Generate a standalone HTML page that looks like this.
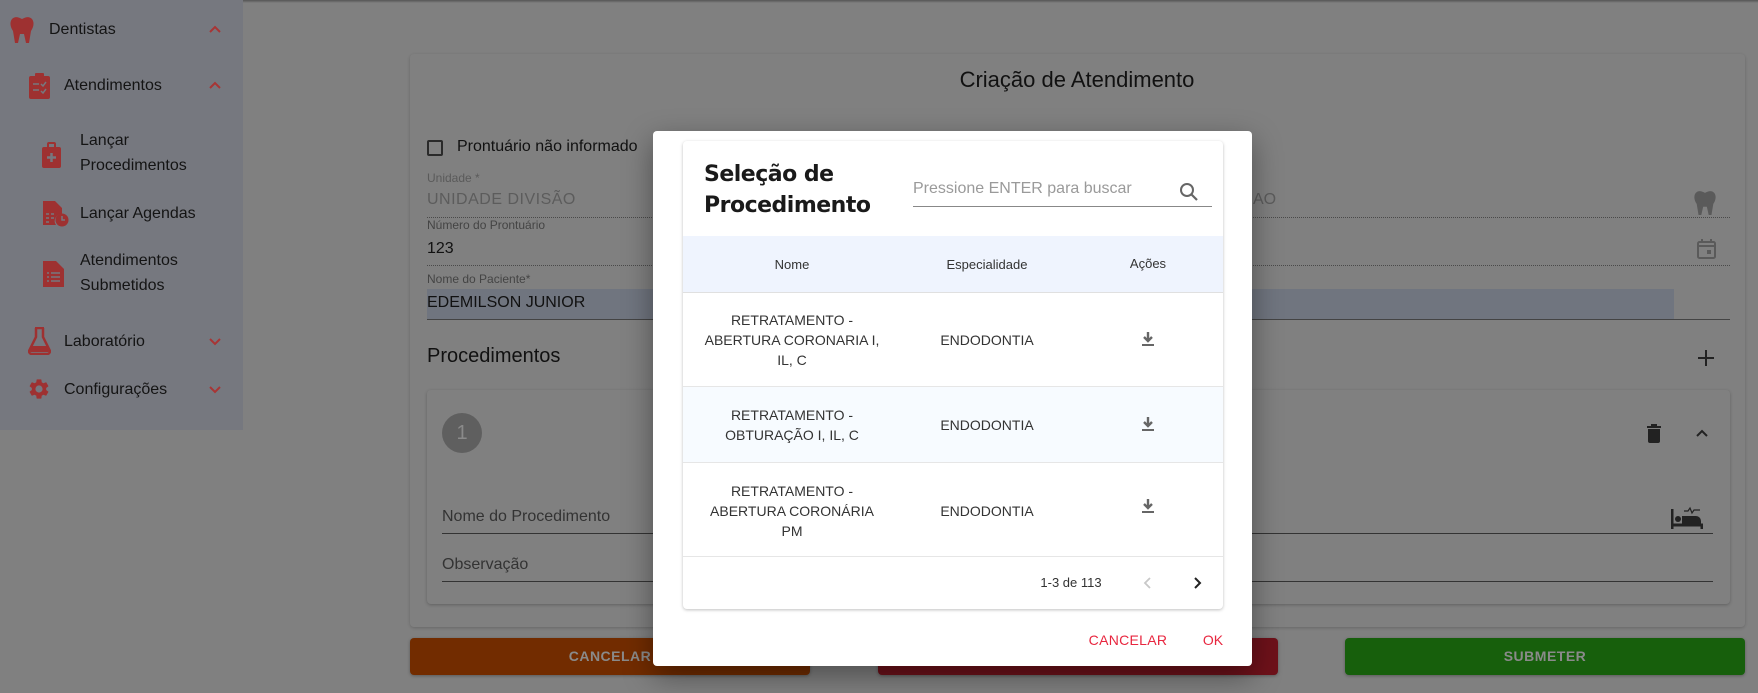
<!DOCTYPE html>
<html><head><meta charset="utf-8"><style>
*{box-sizing:border-box;margin:0;padding:0}
body{width:1758px;height:693px;overflow:hidden;background:#808080;font-family:"Liberation Sans",sans-serif;position:relative}
.a{position:absolute}
.sb{left:0;top:0;width:243px;height:430px;background:#76787f}
.st{font-size:16px;color:#141414;line-height:25px}
.lbl{font-size:12px;color:#444}
.line{height:0;border-top:1px dotted #4a4a4a}
.btn{height:37px;border-radius:4px;color:#8a8a8a;font-weight:bold;font-size:14px;text-align:center;line-height:37px;letter-spacing:.5px;box-shadow:0 1px 3px rgba(0,0,0,.3)}
.dlg{left:653px;top:131px;width:599px;height:535px;background:#fff;border-radius:4px}
.card{left:30px;top:10px;width:540px;height:468px;background:#fff;border-radius:4px;box-shadow:0 1px 3px rgba(0,0,0,.25);overflow:hidden}
.cell{font-size:14px;color:#333;text-align:center;line-height:20px}
</style></head><body>
<div class="a" style="left:0;top:0;width:1758px;height:3px;background:linear-gradient(#555,#808080)"></div>
<div class="a sb"></div>
<svg class="a" style="left:9px;top:16px" width="26" height="28" viewBox="0 0 26 28"><path d="M3 3C6 0 9 1 13 3C17 1 20 0 23 3C26 7 24 12 22 15L20 27H17L15 18H11L9 27H6L4 15C2 12 0 7 3 3Z" fill="#9e3131"/></svg>
<div class="a st" style="left:49px;top:17px">Dentistas</div>
<svg class="a" style="left:208px;top:24px" width="14" height="10" viewBox="0 0 14 10"><path d="M2 8L7 3L12 8" stroke="#a83535" stroke-width="2" fill="none"/></svg>
<svg class="a" style="left:29px;top:73px" width="21" height="26" viewBox="0 0 21 26"><rect x="0" y="3" width="21" height="23" rx="2" fill="#9e3131"/><rect x="6" y="0" width="9" height="6" rx="1" fill="#9e3131"/><path d="M4 11h6M4 17h6M12 11l2 2 3-4M12 18l2 2 3-4" stroke="#76787f" stroke-width="1.5" fill="none"/></svg>
<div class="a st" style="left:64px;top:73px">Atendimentos</div>
<svg class="a" style="left:208px;top:80px" width="14" height="10" viewBox="0 0 14 10"><path d="M2 8L7 3L12 8" stroke="#a83535" stroke-width="2" fill="none"/></svg>
<svg class="a" style="left:42px;top:142px" width="20" height="26" viewBox="0 0 20 26"><rect x="0" y="5" width="19" height="21" rx="2" fill="#9e3131"/><rect x="6" y="1" width="7" height="6" rx="1" fill="none" stroke="#9e3131" stroke-width="2"/><path d="M9.5 11v9M5 15.5h9" stroke="#76787f" stroke-width="2.5"/></svg>
<div class="a st" style="left:80px;top:128px">Lançar<br>Procedimentos</div>
<svg class="a" style="left:43px;top:201px" width="26" height="26" viewBox="0 0 26 26"><path d="M0 0H12L19 7V13A7 7 0 0 0 13 24H0Z" fill="#9e3131"/><circle cx="19" cy="19" r="6.5" fill="#9e3131"/><path d="M19 15v4h3" stroke="#76787f" stroke-width="1.5" fill="none"/><path d="M3 13h3M3 17h3M3 21h3M8 13h3M8 17h3" stroke="#76787f" stroke-width="1.5"/></svg>
<div class="a st" style="left:80px;top:201px">Lançar Agendas</div>
<svg class="a" style="left:43px;top:261px" width="21" height="26" viewBox="0 0 21 26"><path d="M0 0H13L21 8V26H0Z" fill="#9e3131"/><path d="M4 12h2M8 12h9M4 16h2M8 16h9M4 20h2M8 20h9" stroke="#76787f" stroke-width="1.5"/></svg>
<div class="a st" style="left:80px;top:248px">Atendimentos<br>Submetidos</div>
<svg class="a" style="left:28px;top:327px" width="23" height="28" viewBox="0 0 23 28"><path d="M7 1h9M8 1v9L1 24a3 3 0 0 0 3 3H19a3 3 0 0 0 3-3L15 10V1" stroke="#9e3131" stroke-width="2.5" fill="none"/><path d="M4 19H19L21 25H2Z" fill="#9e3131"/></svg>
<div class="a st" style="left:64px;top:329px">Laboratório</div>
<svg class="a" style="left:208px;top:337px" width="14" height="10" viewBox="0 0 14 10"><path d="M2 2L7 7L12 2" stroke="#a83535" stroke-width="2" fill="none"/></svg>
<svg class="a" style="left:27px;top:377px" width="24" height="24" viewBox="0 0 24 24"><path d="M19.14 12.94c.04-.3.06-.61.06-.94s-.02-.64-.07-.94l2.03-1.58a.49.49 0 0 0 .12-.61l-1.92-3.32a.49.49 0 0 0-.59-.22l-2.39.96c-.5-.38-1.03-.7-1.620-.94l-.36-2.54a.48.48 0 0 0-.48-.41h-3.84a.48.48 0 0 0-.47.41l-.36 2.54c-.59.24-1.13.57-1.62.94l-2.390-.96a.48.48 0 0 0-.59.22L2.74 8.87a.47.47 0 0 0 .12.61l2.03 1.58c-.05.3-.09.63-.09.94s.02.64.07.94l-2.03 1.58a.49.49 0 0 0-.12.61l1.92 3.32c.12.22.37.29.59.22l2.39-.96c.5.38 1.03.7 1.62.94l.36 2.54c.05.24.24.41.48.41h3.84c.24 0 .44-.17.47-.41l.36-2.54c.59-.24 1.13-.56 1.62-.94l2.39.96c.22.08.47 0 .59-.22l1.92-3.32a.47.47 0 0 0-.12-.61zM12 15.6a3.6 3.6 0 1 1 0-7.2 3.6 3.6 0 0 1 0 7.2z" fill="#9e3131"/></svg>
<div class="a st" style="left:64px;top:377px">Configurações</div>
<svg class="a" style="left:208px;top:385px" width="14" height="10" viewBox="0 0 14 10"><path d="M2 2L7 7L12 2" stroke="#a83535" stroke-width="2" fill="none"/></svg>

<div class="a" style="left:410px;top:54px;width:1335px;height:573px;border-radius:4px;box-shadow:0 1px 3px rgba(0,0,0,.2)"></div>
<div class="a" style="left:0;width:2154px;top:67px;text-align:center;font-size:22px;color:#111">Criação de Atendimento</div>
<div class="a" style="left:427px;top:140px;width:16px;height:16px;border:2px solid #2a2a2a;border-radius:2px"></div>
<div class="a" style="left:457px;top:138px;font-size:16px;color:#111">Prontuário não informado</div>
<div class="a lbl" style="left:427px;top:171px;color:#5a5a5a">Unidade *</div>
<div class="a" style="left:427px;top:191px;font-size:16px;color:#5c5c5c;letter-spacing:.5px">UNIDADE DIVISÃO</div>
<div class="a" style="left:1253px;top:191px;font-size:16px;color:#5c5c5c">AO</div>
<div class="a line" style="left:427px;top:217px;width:1303px"></div>
<div class="a lbl" style="left:427px;top:218px">Número do Prontuário</div>
<div class="a" style="left:427px;top:240px;font-size:16px;color:#111">123</div>
<div class="a line" style="left:427px;top:265px;width:1303px"></div>
<div class="a lbl" style="left:427px;top:272px">Nome do Paciente*</div>
<div class="a" style="left:427px;top:289px;width:1247px;height:30px;background:#70757f"></div>
<div class="a" style="left:427px;top:294px;font-size:16px;color:#111">EDEMILSON JUNIOR</div>
<div class="a" style="left:427px;top:319px;width:1303px;border-top:1px solid #444"></div>
<svg class="a" style="left:1693px;top:190px" width="24" height="26" viewBox="0 0 26 28"><path d="M3 3C6 0 9 1 13 3C17 1 20 0 23 3C26 7 24 12 22 15L20 27H17L15 18H11L9 27H6L4 15C2 12 0 7 3 3Z" fill="#5a5a5a"/></svg>
<svg class="a" style="left:1697px;top:239px" width="19" height="20" viewBox="0 0 19 20"><rect x="1" y="3" width="17" height="16" rx="1.5" stroke="#5a5a5a" stroke-width="2" fill="none"/><path d="M1 7h17M5 0v4M14 0v4" stroke="#5a5a5a" stroke-width="2"/><rect x="10" y="11" width="4" height="4" fill="#5a5a5a"/></svg>
<div class="a" style="left:427px;top:345px;font-size:20px;color:#111">Procedimentos</div>
<svg class="a" style="left:1697px;top:349px" width="18" height="18"><path d="M9 1v16M1 9h16" stroke="#222" stroke-width="2"/></svg>
<div class="a" style="left:427px;top:390px;width:1303px;height:214px;border-radius:4px;box-shadow:0 1px 3px rgba(0,0,0,.25)"></div>
<div class="a" style="left:442px;top:413px;width:40px;height:40px;border-radius:50%;background:#5f5f5f;color:#8a8a8a;font-size:20px;text-align:center;line-height:40px">1</div>
<svg class="a" style="left:1646px;top:424px" width="16" height="19" viewBox="0 0 16 19"><path d="M1 3h14M5 1h6" stroke="#222" stroke-width="2"/><path d="M2 5h12v12a2 2 0 0 1-2 2H4a2 2 0 0 1-2-2Z" fill="#222"/></svg>
<svg class="a" style="left:1695px;top:428px" width="14" height="10"><path d="M2 8L7 3L12 8" stroke="#222" stroke-width="2" fill="none"/></svg>
<div class="a" style="left:442px;top:508px;font-size:16px;color:#333">Nome do Procedimento</div>
<svg class="a" style="left:1671px;top:505px" width="32" height="25" viewBox="0 0 32 25"><path d="M1 4v20M1 20h30v4" stroke="#222" stroke-width="3" fill="none"/><circle cx="7" cy="14" r="3" fill="#222"/><path d="M11 11h14a5 5 0 0 1 5 5v4H11Z" fill="#222"/><path d="M13 6h4l2-3 2 5 2-3h6" stroke="#222" stroke-width="1.2" fill="none"/></svg>
<div class="a" style="left:442px;top:533px;width:1271px;border-top:1px solid #333"></div>
<div class="a" style="left:442px;top:556px;font-size:16px;color:#333">Observação</div>
<div class="a" style="left:442px;top:581px;width:1271px;border-top:1px solid #333"></div>
<div class="a btn" style="left:410px;top:638px;width:400px;background:#722c00">CANCELAR</div>
<div class="a btn" style="left:878px;top:638px;width:400px;background:#6e111a"></div>
<div class="a btn" style="left:1345px;top:638px;width:400px;background:#175f0c">SUBMETER</div>

<div class="a dlg" style="box-shadow:0 10px 30px rgba(0,0,0,.4)">
 <div class="a card">
  <div class="a" style="left:21px;top:18px;font-size:22px;font-weight:bold;color:#1a1a1a;line-height:31px;font-family:'DejaVu Sans','Liberation Sans',sans-serif;letter-spacing:-0.5px">Seleção de<br>Procedimento</div>
  <div class="a" style="left:230px;top:39px;font-size:16px;color:#9a9a9a">Pressione ENTER para buscar</div>
  <svg class="a" style="left:496px;top:41px" width="20" height="20" viewBox="0 0 20 20"><circle cx="8" cy="8" r="6" stroke="#666" stroke-width="2" fill="none"/><path d="M12.5 12.5L18 18" stroke="#666" stroke-width="2.2"/></svg>
  <div class="a" style="left:230px;top:65px;width:299px;border-top:1px solid #888"></div>
  <div class="a" style="left:0;top:95px;width:540px;height:57px;background:#eff4fe;border-bottom:1px solid #e0e0e0"></div>
  <div class="a cell" style="left:79px;width:60px;top:114px;font-size:13px">Nome</div>
  <div class="a cell" style="left:224px;width:160px;top:114px;font-size:13px">Especialidade</div>
  <div class="a cell" style="left:385px;width:160px;top:113px;font-size:13px">Ações</div>
  <div class="a cell" style="left:9px;width:200px;top:169px">RETRATAMENTO -<br>ABERTURA CORONARIA I,<br>IL, C</div>
  <div class="a cell" style="left:224px;width:160px;top:189px">ENDODONTIA</div>
  <div class="a" style="left:0;top:245px;width:540px;height:77px;background:#f7fbff;border-top:1px solid #e6e6e6;border-bottom:1px solid #e6e6e6"></div>
  <div class="a cell" style="left:9px;width:200px;top:264px">RETRATAMENTO -<br>OBTURAÇÃO I, IL, C</div>
  <div class="a cell" style="left:224px;width:160px;top:274px">ENDODONTIA</div>
  <div class="a cell" style="left:9px;width:200px;top:340px">RETRATAMENTO -<br>ABERTURA CORONÁRIA<br>PM</div>
  <div class="a cell" style="left:224px;width:160px;top:360px">ENDODONTIA</div>
  <div class="a" style="left:0;top:415px;width:540px;border-top:1px solid #e6e6e6"></div>
  <div class="a cell" style="left:328px;width:120px;top:432px;font-size:13px">1-3 de 113</div>
  <svg class="a" style="left:459px;top:435px" width="12" height="14"><path d="M8 2L3 7L8 12" stroke="#c8c8c8" stroke-width="1.8" fill="none"/></svg>
  <svg class="a" style="left:508px;top:435px" width="12" height="14"><path d="M4 2L9 7L4 12" stroke="#222" stroke-width="2" fill="none"/></svg>
  <svg class="a" style="left:458px;top:190px" width="14" height="16"><path d="M7 1v8M3 6l4 4 4-4" stroke="#666" stroke-width="2.4" fill="none"/><path d="M1 14h12" stroke="#666" stroke-width="2"/></svg>
  <svg class="a" style="left:458px;top:275px" width="14" height="16"><path d="M7 1v8M3 6l4 4 4-4" stroke="#666" stroke-width="2.4" fill="none"/><path d="M1 14h12" stroke="#666" stroke-width="2"/></svg>
  <svg class="a" style="left:458px;top:357px" width="14" height="16"><path d="M7 1v8M3 6l4 4 4-4" stroke="#666" stroke-width="2.4" fill="none"/><path d="M1 14h12" stroke="#666" stroke-width="2"/></svg>
 </div>
 <div class="a" style="left:435px;top:501px;width:80px;text-align:center;font-size:14px;color:#e8263f;letter-spacing:.3px">CANCELAR</div>
 <div class="a" style="left:545px;top:501px;width:30px;text-align:center;font-size:14px;color:#e8263f">OK</div>
</div>
</body></html>
